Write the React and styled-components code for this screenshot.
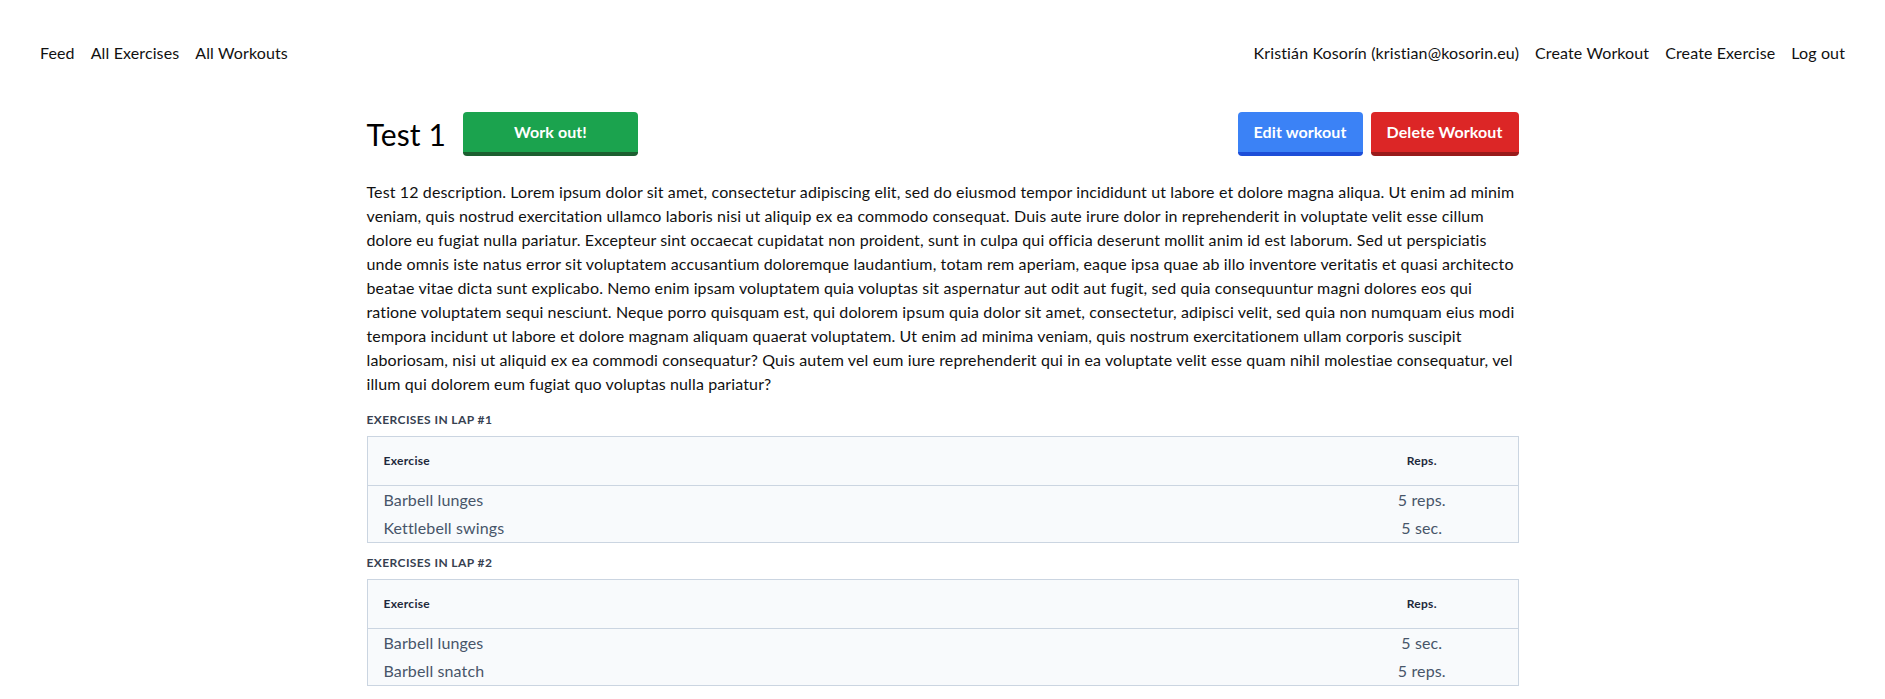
import React from "react";
import styled, { createGlobalStyle } from "styled-components";

const GlobalStyle = createGlobalStyle`
  html, body { margin: 0; padding: 0; background: #ffffff; }
  body {
    font-family: Lato, "Noto Sans", "Liberation Sans", sans-serif;
    font-size: 16px;
    line-height: 24px;
    color: #111111;
    letter-spacing: 0.12px;
  }
  * { box-sizing: border-box; }
`;

const Nav = styled.nav`
  display: flex;
  justify-content: space-between;
  align-items: center;
  padding: 41px 40px 0 40px;
`;

const NavGroup = styled.div`
  display: flex;
  gap: 16px;
`;

const NavLink = styled.a`
  color: #111111;
  text-decoration: none;
  font-size: 16px;
  line-height: 24px;
  cursor: pointer;
`;

const Main = styled.main`
  max-width: 1152px;
  margin: 47px auto 0;
`;

const TitleRow = styled.div`
  display: flex;
  justify-content: space-between;
  align-items: center;
  height: 44px;
`;

const TitleGroup = styled.div`
  display: flex;
  align-items: center;
  gap: 17px;
`;

const Title = styled.h1`
  margin: 0;
  font-size: 30px;
  line-height: 36px;
  font-weight: 400;
  color: #000000;
`;

const ButtonGroup = styled.div`
  display: flex;
  gap: 8px;
`;

const palette = {
  green: { bg: "#1ba34e", edge: "#1c5f30" },
  blue: { bg: "#3b82f6", edge: "#1d4ed8" },
  red: { bg: "#dc2626", edge: "#991b1b" },
};

const Button = styled.button`
  font-family: inherit;
  font-size: 16px;
  font-weight: 700;
  line-height: 24px;
  letter-spacing: 0.1px;
  color: #ffffff;
  background: ${(p) => palette[p.$tone].bg};
  border: none;
  border-bottom: 4px solid ${(p) => palette[p.$tone].edge};
  border-radius: 4px;
  height: 44px;
  padding: 0 16px;
  width: ${(p) => (p.$width ? `${p.$width}px` : "auto")};
  cursor: pointer;
`;

const Description = styled.p`
  margin: 24px 0 16px;
  font-size: 16px;
  line-height: 24px;
  color: #111111;
`;

const LapLabel = styled.h3`
  margin: 12px 0 8px;
  font-size: 12px;
  line-height: 16px;
  font-weight: 700;
  letter-spacing: 0.4px;
  text-transform: uppercase;
  color: #374151;
`;

const Table = styled.table`
  width: 100%;
  border-collapse: collapse;
  border: 1px solid #cbd5e1;
  background: #f8fafc;
`;

const HeadRow = styled.tr`
  border-bottom: 1px solid #cbd5e1;
`;

const Th = styled.th`
  padding: 16px;
  font-size: 12px;
  line-height: 16px;
  font-weight: 700;
  letter-spacing: 0.3px;
  color: #1e293b;
  text-align: ${(p) => (p.$center ? "center" : "left")};
  width: ${(p) => (p.$width ? `${p.$width}px` : "auto")};
`;

const Td = styled.td`
  padding: 2px 16px;
  font-size: 16px;
  line-height: 24px;
  color: #475569;
  text-align: ${(p) => (p.$center ? "center" : "left")};
`;

const description =
  "Test 12 description. Lorem ipsum dolor sit amet, consectetur adipiscing elit, sed do eiusmod tempor incididunt ut labore et dolore magna aliqua. Ut enim ad minim veniam, quis nostrud exercitation ullamco laboris nisi ut aliquip ex ea commodo consequat. Duis aute irure dolor in reprehenderit in voluptate velit esse cillum dolore eu fugiat nulla pariatur. Excepteur sint occaecat cupidatat non proident, sunt in culpa qui officia deserunt mollit anim id est laborum. Sed ut perspiciatis unde omnis iste natus error sit voluptatem accusantium doloremque laudantium, totam rem aperiam, eaque ipsa quae ab illo inventore veritatis et quasi architecto beatae vitae dicta sunt explicabo. Nemo enim ipsam voluptatem quia voluptas sit aspernatur aut odit aut fugit, sed quia consequuntur magni dolores eos qui ratione voluptatem sequi nesciunt. Neque porro quisquam est, qui dolorem ipsum quia dolor sit amet, consectetur, adipisci velit, sed quia non numquam eius modi tempora incidunt ut labore et dolore magnam aliquam quaerat voluptatem. Ut enim ad minima veniam, quis nostrum exercitationem ullam corporis suscipit laboriosam, nisi ut aliquid ex ea commodi consequatur? Quis autem vel eum iure reprehenderit qui in ea voluptate velit esse quam nihil molestiae consequatur, vel illum qui dolorem eum fugiat quo voluptas nulla pariatur?";

const laps = [
  [
    { name: "Barbell lunges", reps: "5 reps." },
    { name: "Kettlebell swings", reps: "5 sec." },
  ],
  [
    { name: "Barbell lunges", reps: "5 sec." },
    { name: "Barbell snatch", reps: "5 reps." },
  ],
];

export default function App() {
  return (
    <>
      <GlobalStyle />
      <Nav>
        <NavGroup>
          <NavLink>Feed</NavLink>
          <NavLink>All Exercises</NavLink>
          <NavLink>All Workouts</NavLink>
        </NavGroup>
        <NavGroup>
          <NavLink>Kristián Kosorín (kristian@kosorin.eu)</NavLink>
          <NavLink>Create Workout</NavLink>
          <NavLink>Create Exercise</NavLink>
          <NavLink>Log out</NavLink>
        </NavGroup>
      </Nav>
      <Main>
        <TitleRow>
          <TitleGroup>
            <Title>Test 1</Title>
            <Button $tone="green" $width={175}>Work out!</Button>
          </TitleGroup>
          <ButtonGroup>
            <Button $tone="blue">Edit workout</Button>
            <Button $tone="red">Delete Workout</Button>
          </ButtonGroup>
        </TitleRow>
        <Description>{description}</Description>
        {laps.map((lap, i) => (
          <section key={i}>
            <LapLabel>Exercises in lap #{i + 1}</LapLabel>
            <Table>
              <thead>
                <HeadRow>
                  <Th>Exercise</Th>
                  <Th $center $width={192}>Reps.</Th>
                </HeadRow>
              </thead>
              <tbody>
                {lap.map((ex, j) => (
                  <tr key={j}>
                    <Td>{ex.name}</Td>
                    <Td $center>{ex.reps}</Td>
                  </tr>
                ))}
              </tbody>
            </Table>
          </section>
        ))}
      </Main>
    </>
  );
}
